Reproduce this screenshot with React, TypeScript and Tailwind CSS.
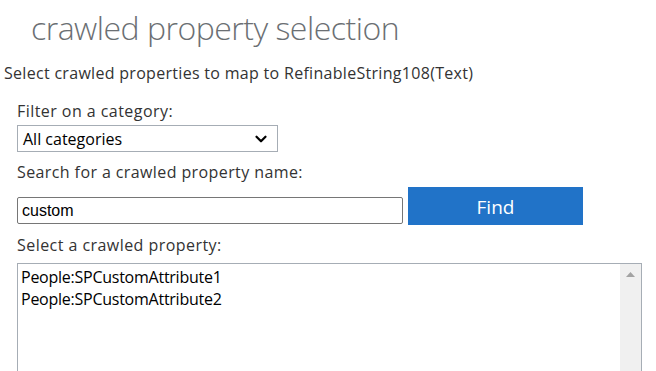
import { ChevronDown } from "lucide-react";

const items = ["People:SPCustomAttribute1", "People:SPCustomAttribute2"];

export default function App() {
  return (
    <main className="h-[371px] w-[656px] overflow-hidden bg-white font-['Open_Sans',sans-serif] text-[#333]">
      <h1 className="pl-[31px] pt-[4px] text-[32px] font-light leading-[48px] tracking-[-0.5px] text-[#6b6f73]">
        crawled property selection
      </h1>
      <p className="mt-[11px] pl-[4px] text-[16px] leading-[20px] tracking-[0.3px]">
        Select crawled properties to map to RefinableString108(Text)
      </p>

      <div className="mt-[18px] pl-[17px]">
        <label className="block text-[16px] leading-[20px] tracking-[0.45px]">Filter on a category:</label>
        <div className="mt-[4px] flex h-[27px] w-[261px] items-center justify-between border border-[#a6adb5] pl-[5px] pr-[7px] text-[16px] text-black">
          <span>All categories</span>
          <ChevronDown className="h-[18px] w-[18px]" strokeWidth={3} />
        </div>

        <label className="mt-[10px] block text-[16px] leading-[20px] tracking-[0.4px]">
          Search for a crawled property name:
        </label>
        <div className="mt-[5px] flex items-center gap-[5px]">
          <div className="mt-[9px] flex h-[27px] w-[386px] items-center rounded-[2px] border border-[#767676] px-[4px] font-['Liberation_Sans',sans-serif] text-[16px] text-black">
            custom
          </div>
          <button className="flex h-[38px] w-[175px] items-center justify-center bg-[#2173c8] pt-[3px] text-[19px] text-white">
            Find
          </button>
        </div>

        <label className="mt-[10px] block text-[16px] leading-[20px] tracking-[0.45px]">
          Select a crawled property:
        </label>
        <div className="mt-[8px] flex h-[140px] w-[625px] border border-[#a6adb5]">
          <ul className="flex-1 pl-[3px] pt-[2px] text-[16px] leading-[22px] tracking-[-0.25px] text-black">
            {items.map((item) => (
              <li key={item}>{item}</li>
            ))}
          </ul>
          <div className="flex w-[21px] justify-center bg-[#f0f0f0] pt-[8px]">
            <svg width="9" height="5" viewBox="0 0 9 5">
              <path d="M4.5 0 L9 5 L0 5 Z" fill="#a3a3a3" />
            </svg>
          </div>
        </div>
      </div>
    </main>
  );
}
